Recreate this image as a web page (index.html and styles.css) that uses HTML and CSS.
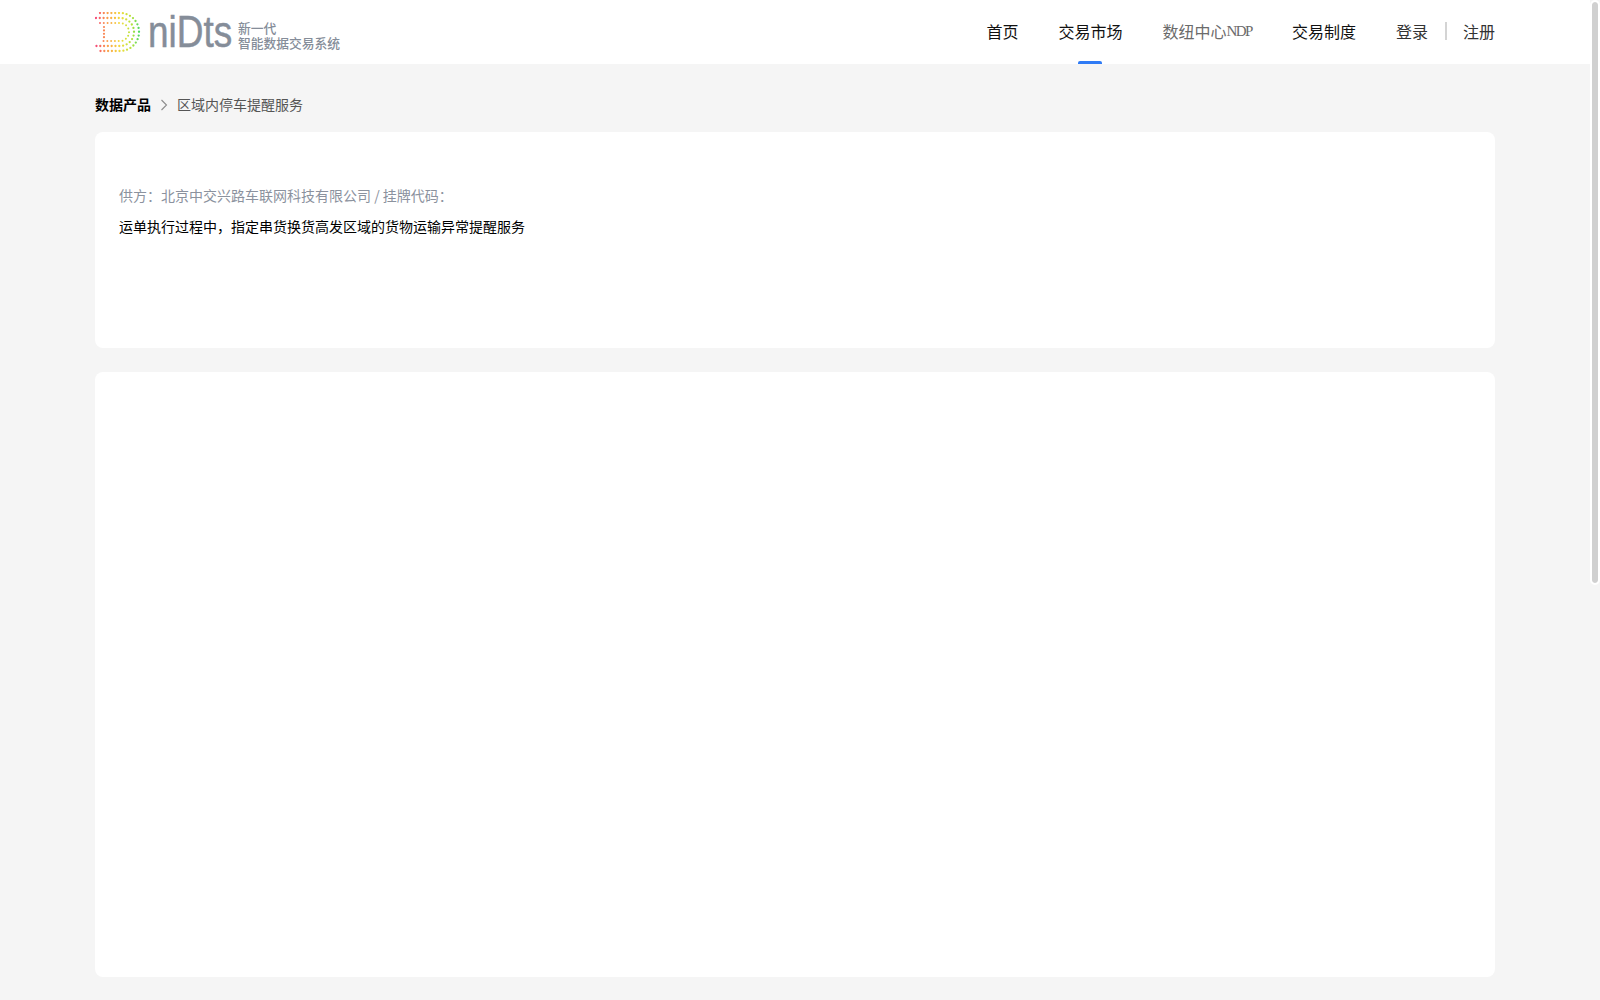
FILE: index.html
```html
<!DOCTYPE html>
<html lang="zh-CN">
<head>
<meta charset="utf-8">
<title>区域内停车提醒服务</title>
<link rel="stylesheet" href="styles.css">
</head>
<body>
<header class="topbar">
  <div class="topbar-inner">
    <a class="logo" href="#">
      <svg class="logo-mark" width="46" height="42" viewBox="0 0 46 42" fill="none" aria-hidden="true">
        <defs>
          <linearGradient id="dots" gradientUnits="userSpaceOnUse" x1="0" y1="0" x2="46" y2="0">
            <stop offset="0" stop-color="#f4447c"/>
            <stop offset="0.25" stop-color="#fb9b4c"/>
            <stop offset="0.55" stop-color="#f2dc3c"/>
            <stop offset="0.8" stop-color="#b4e23c"/>
            <stop offset="1" stop-color="#34d66a"/>
          </linearGradient>
        </defs>
        <g stroke="url(#dots)" stroke-linecap="round">
          <path d="M5 1H25C35.500 1 44 9.500 44 20S35.500 39 25 39H5" stroke-width="2.300" stroke-dasharray="0 3.8"/>
          <path d="M1 6H25C32.700 6 39 12.300 39 20S32.700 34 25 34H1" stroke-width="2.300" stroke-dasharray="0 3.8"/>
          <path d="M5 11H25C30 11 34 15 34 20S30 29 25 29H5" stroke-width="2" stroke-dasharray="0 3.8"/>
          <path d="M9 15V26" stroke-width="2.200" stroke-dasharray="0 3.4"/>
        </g>
      </svg>
      <span class="logo-word"><span class="logo-word-text">niDts</span></span>
      <span class="logo-tag"><span>新一代</span><span>智能数据交易系统</span></span>
    </a>
    <nav class="nav">
      <a class="nav-item" href="#">首页</a>
      <a class="nav-item is-active" href="#">交易市场</a>
      <a class="nav-item is-ndp" href="#">数纽中心<span class="ndp">NDP</span></a>
      <a class="nav-item" href="#">交易制度</a>
    </nav>
    <div class="auth">
      <a href="#">登录</a>
      <i class="auth-sep"></i>
      <a href="#">注册</a>
    </div>
  </div>
</header>
<main class="page">
  <div class="crumbs">
    <strong>数据产品</strong>
    <svg class="crumb-arrow" width="8" height="12" viewBox="0 0 8 12" fill="none" aria-hidden="true"><path d="M1.500 1L6.500 6L1.500 11" stroke="#8c8c8c" stroke-width="1.100"/></svg>
    <span>区域内停车提醒服务</span>
  </div>
  <section class="card card-info">
    <p class="supplier">供方：北京中交兴路车联网科技有限公司 / 挂牌代码：</p>
    <p class="summary">运单执行过程中，指定串货换货高发区域的货物运输异常提醒服务</p>
  </section>
  <section class="card card-detail"></section>
</main>
<div class="scroll-thumb" aria-hidden="true"></div>
</body>
</html>
```
FILE: styles.css
```css
* { box-sizing: border-box; }
html { background: #f5f5f5; }
body {
  margin: 0;
  padding-right: 10px;
  color: #000;
  font-family: "Noto Sans CJK SC", "Liberation Sans", sans-serif;
  font-size: 14px;
}
a { color: inherit; text-decoration: none; }
p { margin: 0; }

.scroll-thumb {
  position: fixed;
  top: 0;
  right: 0;
  width: 10px;
  height: 585px;
  background: #d0d0d0;
  background-clip: padding-box;
  border: 2px solid #fff;
  border-radius: 5px;
}

.topbar { height: 64px; background: #fff; }
.topbar-inner {
  width: 1400px;
  height: 100%;
  margin: 0 auto;
  display: flex;
  align-items: center;
}
.logo { display: flex; align-items: center; }
.logo-mark { flex: none; margin-top: 1px; }
.logo-word {
  flex: none;
  width: 85px;
  margin-left: 7px;
  font-family: "Liberation Sans", sans-serif;
  font-size: 44px;
  line-height: 44px;
  color: #858d99;
  -webkit-text-stroke: 0.5px #858d99;
}
.logo-word-text { display: inline-block; transform: scaleX(0.84); transform-origin: left center; }
.logo-tag {
  margin-left: 5px;
  margin-top: 6px;
  display: flex;
  flex-direction: column;
  font-size: 12.750px;
  line-height: 15px;
  font-weight: 500;
  white-space: nowrap;
  color: #858d99;
}
.nav { margin-left: auto; display: flex; gap: 40px; height: 100%; }
.nav-item {
  position: relative;
  display: flex;
  align-items: center;
  padding-bottom: 2px;
  font-size: 16px;
  color: #111;
}
.nav-item.is-active::after {
  content: "";
  position: absolute;
  left: 50%;
  bottom: 0;
  width: 24px;
  height: 3px;
  margin-left: -12px;
  border-radius: 2px 2px 0 0;
  background: #2f7bf5;
}
.nav-item.is-ndp { color: #6b6b6b; }
.ndp { font-family: "Liberation Serif", serif; font-size: 15px; letter-spacing: -1.500px; }
.auth { margin-left: 40px; display: flex; align-items: center; padding-bottom: 2px; font-size: 16px; color: #333; }
.auth-sep { width: 2px; height: 18px; margin: 0 16px 0 17px; background: #d4d4d4; }

.page { width: 1400px; margin: 0 auto; }
.crumbs { height: 68px; padding-top: 12px; display: flex; align-items: center; gap: 9px; color: #555; }
.crumbs strong { color: #000; font-weight: 700; }
.crumb-arrow { flex: none; margin-top: 2px; }
.card { background: #fff; border-radius: 8px; }
.card-info { height: 216px; padding: 51px 24px 0; }
.supplier { color: #8b929e; line-height: 24px; }
.summary { margin-top: 7px; color: #000; line-height: 24px; }
.card-detail { height: 605px; margin-top: 24px; }
```
